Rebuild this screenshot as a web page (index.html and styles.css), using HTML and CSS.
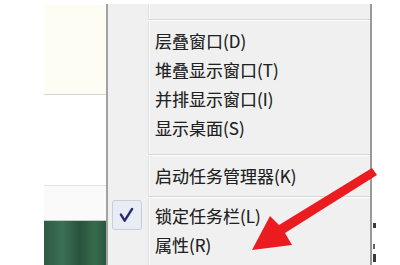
FILE: index.html
```html
<!DOCTYPE html>
<html lang="zh-CN">
<head>
<meta charset="utf-8">
<title>任务栏菜单</title>
<link rel="stylesheet" href="styles.css">
</head>
<body>
<div class="screen">
  <div class="desk">
    <div class="cream"></div>
    <div class="blank"></div>
    <div class="pale"></div>
    <div class="green"></div>
  </div>
  <div class="menu">
    <div class="item item-top"><span class="gut"></span></div>
    <div class="sep sep-1"></div>
    <div class="item"><span class="gut"></span><span class="label">层叠窗口(D)</span></div>
    <div class="item"><span class="gut"></span><span class="label">堆叠显示窗口(T)</span></div>
    <div class="item"><span class="gut"></span><span class="label">并排显示窗口(I)</span></div>
    <div class="item"><span class="gut"></span><span class="label">显示桌面(S)</span></div>
    <div class="sep sep-2"></div>
    <div class="item item-tall"><span class="gut"></span><span class="label">启动任务管理器(K)</span></div>
    <div class="sep sep-3"></div>
    <div class="item item-tall"><span class="gut"><span class="check"><svg viewBox="0 0 30 30" width="28" height="28"><path d="M8.5 14.5 L12.5 21 L20.5 8.5" fill="none" stroke="#2c2a6c" stroke-width="2.6" stroke-linecap="round" stroke-linejoin="round"/></svg></span></span><span class="label">锁定任务栏(L)</span></div>
    <div class="item item-tall"><span class="gut"></span><span class="label">属性(R)</span></div>
  </div>
  <div class="edge">
    <i class="mark mark-1"></i>
    <i class="mark mark-2"></i>
    <i class="mark mark-3"></i>
  </div>
  <svg class="arrow" viewBox="0 0 400 265" width="400" height="265">
    <polygon points="372,168 279,225 270,216 252,250 292,245 285,233 377,175" fill="#ea1c1f"/>
  </svg>
</div>
</body>
</html>
```

FILE: styles.css
```css
html, body {
  margin: 0;
  padding: 0;
  background: #fff;
  overflow: hidden;
}

.screen {
  position: relative;
  display: flex;
  width: 400px;
  height: 265px;
  font-family: "Noto Sans CJK SC", "Microsoft YaHei", sans-serif;
}

.desk {
  margin-left: 44px;
  width: 62px;
  padding-top: 5px;
  display: flex;
  flex-direction: column;
}

.cream {
  height: 89px;
  background: #fdfdf3;
  border-bottom: 1px solid #d6d6d2;
}

.blank {
  height: 90px;
  background: #fff;
  border-bottom: 1px solid #e2e2e2;
}

.pale {
  height: 34px;
  background: #fafafa;
  border-bottom: 1px solid #c4cbc6;
}

.green {
  flex: 1;
  background: linear-gradient(90deg, #2d5b42 0%, #3c6f53 30%, #28533b 58%, #376a4d 82%, #2b5740 100%);
}

.menu {
  margin-top: 4px;
  width: 262px;
  border-left: 2px solid #a3a3a3;
  border-right: 2px solid #9a9a9a;
  background: linear-gradient(90deg, #f0f0f0 0 40px, #e0e1e1 40px 41px, #fbfbfb 41px 42px, #f0f0f0 42px);
  display: flex;
  flex-direction: column;
  overflow: hidden;
}

.item {
  display: flex;
  align-items: center;
  height: 28.75px;
  flex: none;
  font-size: 17px;
  color: #222;
}

.item-top {
  height: 15px;
}

.item-tall {
  height: 29px;
}

.gut {
  width: 42px;
  height: 100%;
  display: flex;
  align-items: center;
  padding-left: 4px;
  box-sizing: border-box;
  flex: none;
}

.label {
  padding-left: 5px;
  line-height: 1;
  white-space: nowrap;
  text-shadow: 0 0 0.6px rgba(0, 0, 0, 0.35);
}

.check {
  width: 28px;
  height: 28px;
  border: 1px solid #c6cddd;
  border-radius: 3px;
  background: #e8ecf4;
  display: flex;
}

.sep {
  flex: none;
  height: 1px;
  margin-left: 40px;
  background: #d6d6d6;
  border-bottom: 1px solid #fdfdfd;
}

.sep-1 {
  margin-bottom: 5.5px;
}

.sep-2 {
  margin-top: 12.5px;
  margin-bottom: 4.5px;
}

.sep-3 {
  margin-top: 6.5px;
  margin-bottom: 2.5px;
}

.edge {
  flex: 1;
  padding-top: 223px;
  padding-left: 1px;
  display: flex;
  flex-direction: column;
  align-items: flex-start;
}

.mark {
  display: block;
  width: 3px;
  background: #3a3a3a;
}

.mark-1 {
  height: 5px;
}

.mark-2 {
  height: 5px;
  margin-top: 16px;
  width: 2px;
  background: #666;
}

.mark-3 {
  height: 8px;
  margin-top: 5px;
}

.arrow {
  position: absolute;
  left: 0;
  top: 0;
  pointer-events: none;
  filter: blur(0.4px);
}
```
